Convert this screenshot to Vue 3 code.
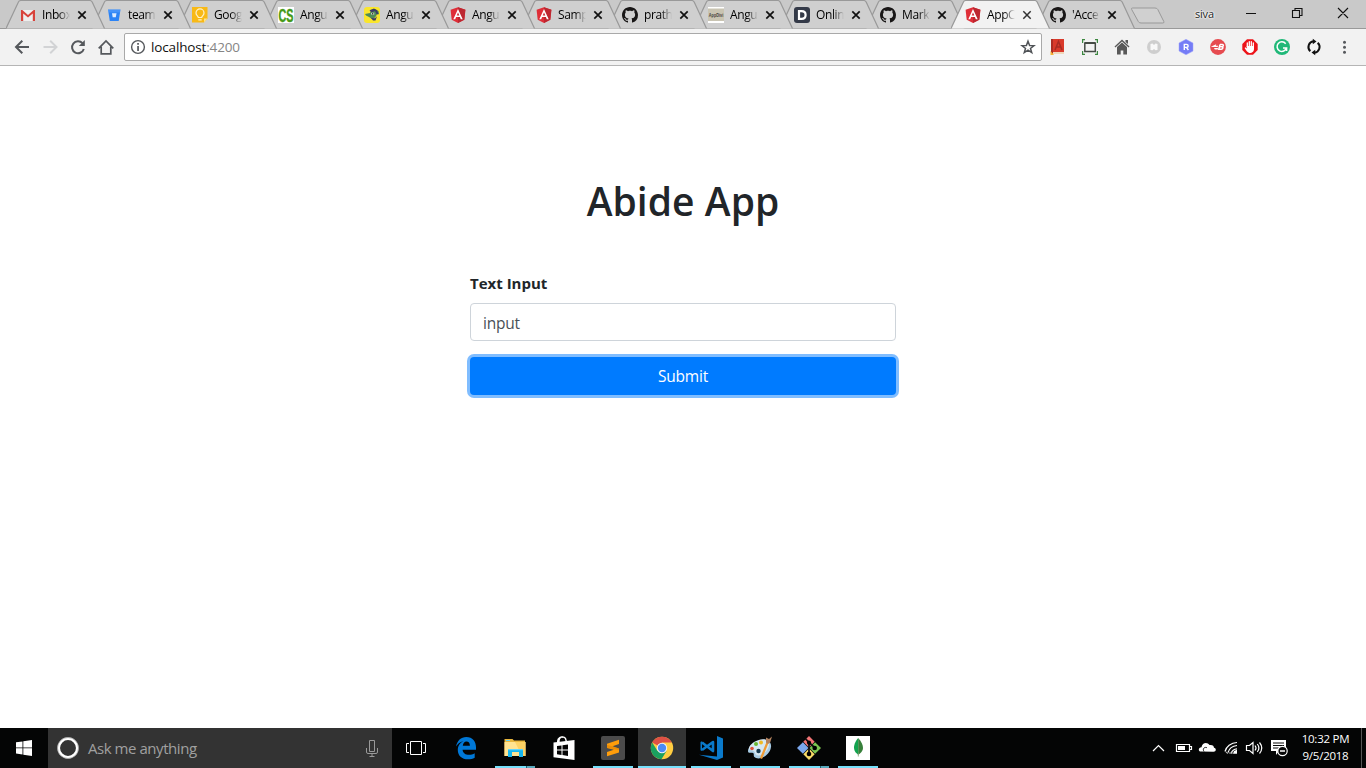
<script setup>
const tabs = [
  { title: 'Inbox', icon: 'gmail' },
  { title: 'team', icon: 'bucket' },
  { title: 'Goog', icon: 'keep' },
  { title: 'Angu', icon: 'cs' },
  { title: 'Angu', icon: 'bird' },
  { title: 'Angu', icon: 'angular' },
  { title: 'Samp', icon: 'angular' },
  { title: 'prath', icon: 'github' },
  { title: 'Angu', icon: 'appdiv' },
  { title: 'Onlin', icon: 'disqus' },
  { title: 'Mark', icon: 'github' },
  { title: 'AppC', icon: 'angular', active: true },
  { title: "'Acce", icon: 'github' }
]
const extensions = ['book', 'screen', 'house', 'pale', 'hex', 'bolt', 'hand', 'grammar', 'sync', 'menu']
const apps = [
  { icon: 'edge' },
  { icon: 'explorer', run: 'multi' },
  { icon: 'store' },
  { icon: 'sublime', run: 'one' },
  { icon: 'chrome', run: 'one', active: true },
  { icon: 'code', run: 'one' },
  { icon: 'paint', run: 'one' },
  { icon: 'git', run: 'multi' },
  { icon: 'mongo', run: 'one' }
]
</script>

<template>
  <div class="screen">
    <header class="tabstrip">
      <div class="tabs">
        <div v-for="(t, i) in tabs" :key="i" class="tab" :class="{ active: t.active }" :style="{ zIndex: t.active ? 30 : 20 - i }">
          <svg class="shape" width="100" height="29" viewBox="0 0 100 29">
            <path d="M0 28.5 L12.3 2.3 Q13 .5 15 .5 H83.500 Q85.500 .5 86.300 2.300 L98.500 28.500" />
          </svg>
          <svg class="fav" viewBox="0 0 16 16">
            <g v-if="t.icon === 'gmail'">
              <path fill="#eee" d="M1 3h14v11H1z" />
              <path fill="#d8433b" d="M1 14V3h1.300L8 8l5.700-5H15v11h-2.200V6.400L8 10.600 3.200 6.400V14z" />
            </g>
            <g v-else-if="t.icon === 'bucket'">
              <path fill="#2b83f6" d="M2 2.500h12.500L12.700 14H3.800z" />
              <path fill="#76b1ff" d="M2 2.500h12.500l-.5 3H2.500z" opacity=".35" />
              <path fill="#dcebff" d="M6 6.300h4.500l-.7 3.900H6.700z" />
            </g>
            <g v-else-if="t.icon === 'keep'">
              <path fill="#f8b916" d="M0 0h15.500v11.500L12 15.500H0z" />
              <path fill="#fce28d" d="M15.500 11.500H12v4z" />
              <path fill="none" stroke="#fff2c8" stroke-width="1.200" d="M6.300 10.500c0-1.500-2.300-2-2.300-4.600a4 4 0 0 1 8 0c0 2.600-2.300 3.100-2.300 4.600zM6.300 12.800h3.400" />
            </g>
            <g v-else-if="t.icon === 'cs'">
              <path fill="#fff" d="M0 0h16v16H0z" />
              <text x=".5" y="14.500" textLength="15" lengthAdjust="spacingAndGlyphs" font-family="Liberation Sans" font-weight="700" font-size="18" fill="#459a17" stroke="#459a17" stroke-width=".4">CS</text>
            </g>
            <g v-else-if="t.icon === 'bird'">
              <rect width="16" height="16" rx="3" fill="#fae62c" />
              <path fill="#4e8b57" d="M1 7l5-1 1-3 4-1 3.500 2 .5 3-2 .5-2 3-3 1.500L5 10 2 8.500z" />
              <path fill="#3c3d69" d="M5.500 3.300L10 1.600 13 3.300l1.500 4-2-.3-1.500-3-3.500 1.500zM7 11l4 .3 2-2-1.500 4.200H9z" />
              <path fill="#d8e5cd" d="M7.200 5.800h3v1.800h-3z" />
              <circle cx="8.700" cy="6.700" r=".7" fill="#222" />
            </g>
            <g v-else-if="t.icon === 'angular'">
              <path fill="#df2e38" d="M8 .2l7.400 2.600-1.100 9.900L8 16l-6.300-3.300L.6 2.800z" />
              <path fill="#bd2730" d="M8 .2l7.400 2.600-1.100 9.900L8 16z" />
              <path fill="#fff" fill-rule="evenodd" d="M8 1.900l4.700 10.400h-1.900l-.9-2.400H6.100l-.9 2.400H3.300zM8 5.400L6.700 8.400h2.600z" />
            </g>
            <path v-else-if="t.icon === 'github'" fill="#181616" d="M8 0C3.580 0 0 3.580 0 8c0 3.540 2.290 6.530 5.470 7.590.4.070.55-.17.55-.38 0-.19-.01-.82-.01-1.490-2.010.37-2.530-.49-2.690-.94-.09-.23-.48-.94-.82-1.130-.28-.15-.68-.52-.01-.53.63-.01 1.080.58 1.230.82.72 1.210 1.870.87 2.330.66.070-.52.28-.87.51-1.070-1.780-.2-3.640-.89-3.640-3.950 0-.87.31-1.590.82-2.150-.08-.2-.36-1.020.08-2.120 0 0 .67-.21 2.200.82.64-.18 1.320-.27 2-.27s1.360.09 2 .27c1.530-1.040 2.200-.82 2.200-.82.44 1.100.16 1.920.08 2.120.51.56.82 1.270.82 2.150 0 3.070-1.870 3.750-3.650 3.950.29.25.54.73.54 1.480 0 1.070-.01 1.930-.01 2.200 0 .21.15.46.55.38A8.010 8.010 0 0 0 16 8c0-4.420-3.580-8-8-8z" />
            <g v-else-if="t.icon === 'appdiv'">
              <path fill="#fff" d="M0 0h16v16H0z" />
              <path fill="#c9c4b2" d="M0 1.500h16V14H0z" />
              <text x=".8" y="9.600" textLength="14.400" lengthAdjust="spacingAndGlyphs" font-family="Liberation Sans" font-weight="700" font-size="4.600" fill="#45423c">AppDivi</text>
            </g>
            <g v-else>
              <rect width="16" height="16" rx="3" fill="#343a48" />
              <path fill="none" stroke="#fff" stroke-width="2.200" d="M5 4.100h2.600c2.500 0 4 1.500 4 3.900s-1.500 3.900-4 3.900H5z" />
            </g>
          </svg>
          <span class="title">{{ t.title }}</span>
          <svg class="close" viewBox="0 0 8 8"><path d="M.3.300l7.400 7.400M7.700.300L.3 7.700" /></svg>
        </div>
      </div>
      <svg class="newtab" width="36" height="18" viewBox="0 0 36 18"><path d="M2.500 1H25q2 0 2.800 1.500l6 12q.7 1.500-1 1.500H11q-2 0-2.700-1.500L1.700 2.500q-.7-1.500.8-1.500z" /></svg>
      <span class="user">siva</span>
      <svg class="winctl" width="116" height="14" viewBox="0 0 116 14">
        <path d="M1 7.500h10M47.500 4.500h7v7h-7zM50 4V2.500h7v7H55M93 2l10 10M103 2L93 12" />
      </svg>
    </header>

    <nav class="toolbar">
      <svg class="navicons" width="116" height="20" viewBox="0 0 116 20">
        <g fill="none" stroke="#55585c" stroke-width="2">
          <path d="M29 10H16.500M22.300 3.700L16 10l6.300 6.300" />
          <path stroke="#d2d3d5" d="M43.500 10H56M50.200 3.700L56.500 10l-6.300 6.300" />
          <path d="M82.500 6.200A6 6 0 1 0 83.800 12" />
          <path stroke-width="1.700" d="M98.700 11.300L106 4l7.300 7.300M101.200 9.800v7h9.600v-7" />
        </g>
        <path fill="#55585c" d="M84.800 3v6h-6z" />
      </svg>
      <div class="omnibox">
        <svg class="info" viewBox="0 0 16 16"><circle cx="8" cy="8" r="6.400" fill="none" stroke="#55585c" stroke-width="1.400" /><path fill="#55585c" d="M7.200 4h1.700v1.700H7.200zM7.200 7h1.700v5H7.200z" /></svg>
        <span class="url">localhost<i>:4200</i></span>
        <svg class="star" viewBox="0 0 16 16"><path d="M8 2.200l1.600 4.200 4.400.2-3.500 2.800 1.200 4.200L8 11.200l-3.700 2.400 1.200-4.200L2 6.600l4.400-.2z" /></svg>
      </div>
      <div class="exts">
        <svg v-for="e in extensions" :key="e" viewBox="0 0 16 16">
          <g v-if="e === 'book'">
            <path fill="#d93a2b" d="M1 0h13v15H1z" /><path fill="#aa2d24" d="M1 0h2v14H1z" />
            <path fill="#efd7ba" d="M3 13h11v2H3z" />
            <path fill="none" stroke="#a82c24" stroke-width="1.500" d="M5 11l3.500-8.500 3.500 8.500M6.500 8h4" />
            <path fill="#f6b635" d="M.5 12l3.500 4H.5z" />
          </g>
          <g v-else-if="e === 'screen'" fill="none">
            <path stroke="#454b45" stroke-width="1.500" d="M2.800 4h10.500v8.500H2.800z" />
            <path stroke="#454b45" stroke-width="2" d="M3 4h10" />
            <path stroke="#3c8840" stroke-width="1.200" d="M.6 4V.6H3M13 .6h2.400V4M.6 12v3.400H3M13 15.400h2.400V12" />
          </g>
          <g v-else-if="e === 'house'" fill="#595959">
            <path d="M8 .5l7.500 7-.9 1L8 2.500 1.400 8.500l-.9-1zM11.500 1H14v4l-2.500-2z" />
            <path d="M3 8l5-4.600L13 8v7.500H9.300v-4H6.700v4H3z" />
          </g>
          <g v-else-if="e === 'pale'">
            <circle cx="8" cy="8" r="7" fill="#cecece" />
            <path fill="#f8f8f8" d="M4.500 5l2-.5L8 6l1.500-1.500 2 .5v6l-2 .3L8 10l-1.500 1.300-2-.3z" />
          </g>
          <g v-else-if="e === 'hex'">
            <path fill="#757cf6" stroke="#9fa5fa" stroke-width=".5" d="M8 .3l7 3.800v8L8 15.800 1 12V4z" />
            <path fill="none" stroke="#fff" stroke-width="1.400" d="M6.300 11V5.400h2.200c2.200 0 2.200 3 0 3H6.500M8.400 8.400l2 2.600" />
          </g>
          <g v-else-if="e === 'bolt'">
            <circle cx="8" cy="8" r="7.900" fill="#e64b50" />
            <path fill="#fff" d="M.8 7.800l5.400-2.500L5.800 6.800h2.300L7.700 8H3.500zM4 9h4L7.700 10.500H4.800z" />
            <path fill="none" stroke="#fff" stroke-width="1.500" d="M10 5.500h2.400c1.600 0 1 2.300-.4 2.300H9.700m2.300 0c1.600 0 .9 2.500-.7 2.500H8.800l1.200-4.800" />
          </g>
          <g v-else-if="e === 'hand'">
            <path fill="#ed1319" d="M5 .3h6l4.700 4.700v6L11 15.700H5L.3 11V5z" />
            <path fill="none" stroke="#fff" stroke-width="1.300" stroke-linecap="round" d="M5.300 8V4M7.300 7V2.600M9.300 7V2.600M11.300 8V4" />
            <path fill="#fff" d="M4.600 7h7.400v3.300C11.800 13 10 14 8.200 14c-2.800 0-3.700-2.400-5.600-5l.8-.7 1.700 1.200z" />
          </g>
          <g v-else-if="e === 'grammar'">
            <circle cx="8" cy="8" r="8" fill="#20b878" />
            <path fill="none" stroke="#fff" stroke-width="1.500" d="M11.700 4.700A4.800 4.800 0 1 0 12.500 9H9M12.600 8.500V12" />
          </g>
          <g v-else-if="e === 'sync'" fill="none" stroke="#111" stroke-width="2">
            <path d="M4.300 12.300A5.800 5.800 0 0 1 7.500 2.300M11.700 3.700A5.800 5.800 0 0 1 8.500 13.700" />
            <path fill="#111" stroke="none" d="M6.800-.3L10.500 2.500 6.800 5.300zM9.200 16.300L5.500 13.500l3.700-2.800z" />
          </g>
          <g v-else fill="#55585c"><circle cx="6.500" cy="3.200" r="1.500" /><circle cx="6.500" cy="8.200" r="1.500" /><circle cx="6.500" cy="13.200" r="1.500" /></g>
        </svg>
      </div>
    </nav>

    <main class="page">
      <h1>Abide App</h1>
      <form @submit.prevent>
        <label for="text">Text Input</label>
        <input id="text" type="text" value="input" />
        <button type="submit">Submit</button>
      </form>
    </main>

    <footer class="taskbar">
      <div class="start">
        <svg width="16" height="16" viewBox="0 0 16 16" fill="#fff"><path d="M0 2.300L6.500 1.400v6.100H0zM7.300 1.300L16 0v7.500H7.300zM0 8.300h6.500v6.200L0 13.600zM7.300 8.300H16V16l-8.700-1.300z" /></svg>
      </div>
      <div class="search">
        <svg width="22" height="22" viewBox="0 0 22 22"><circle cx="11" cy="11" r="9.300" fill="none" stroke="#fff" stroke-width="2.700" /><circle cx="11" cy="11" r="10.500" fill="none" stroke="#999" stroke-width=".7" /></svg>
        <span>Ask me anything</span>
        <svg class="mic" width="12" height="17" viewBox="0 0 12 17"><path d="M3.500.500h5v11h-5zM.5 8v4q0 1.500 1.500 1.500h8q1.500 0 1.500-1.500V8M6 13.500v3M3.500 16.500h5" /></svg>
      </div>
      <div class="taskview">
        <svg width="20" height="14" viewBox="0 0 20 14" fill="none" stroke="#fff"><path d="M4.500.500h11v13h-11zM3 2.500H.5v9H3M17 2.500h2.500v9H17" /></svg>
      </div>
      <div v-for="a in apps" :key="a.icon" class="app" :class="[a.run, { active: a.active }]">
        <svg viewBox="0 0 24 24">
          <path v-if="a.icon === 'edge'" fill="#0078d7" d="M2 10.600C3.100 4.800 6.900 1 12.300 1 18.600 1 22 5.500 22 11.300v2.400H8.600c.2 3.400 3 5.100 6.300 5.100 2.200 0 4.100-.6 5.800-1.600v4.500c-1.900 1-4.200 1.500-6.700 1.500-6.200 0-10.200-3.600-10.200-9.300 0-4 2.300-7.200 5.800-8.900C5.800 5.900 3.200 8.300 2 10.600zM8.800 9.800h7.100c0-2.700-1.200-4.200-3.500-4.200-2 0-3.300 1.700-3.600 4.200z" />
          <g v-else-if="a.icon === 'explorer'">
            <path fill="#e8b63d" d="M1.500 3h8l1.500 1.500h11V20h-20.500z" />
            <path fill="#ffe391" d="M1.500 6h21v14h-21z" />
            <path fill="#fdd264" d="M12 6h10.500v14H19z" />
            <path fill="#16b6ef" d="M5 13h15v8h-4v-5H9v5H5z" />
            <path fill="#62d4fa" d="M5 13h15v1.200H5zM3 4h4v1H3z" />
          </g>
          <g v-else-if="a.icon === 'store'">
            <path fill="none" stroke="#fff" stroke-width="1.400" d="M7 6V4.500C7 1 11.500-.5 13.500 2.500l1 3.500M5.700 7V5c0-3 3.500-5 6-3.500" />
            <path fill="#fff" d="M1.500 6.500L22.500 4v20L1.500 21.300z" />
            <path fill="#050505" d="M5 10l4.500-.6v4.200H5zM10.500 9.200l5.500-.8v5.200h-5.500zM5 14.600h4.500V19L5 18.300zM10.500 14.600H16v5.300l-5.500-.8z" />
          </g>
          <g v-else-if="a.icon === 'sublime'">
            <rect width="24" height="24" rx="2" fill="#4b4b4b" />
            <path fill="#ff9d0a" d="M6 7.700l12-3.900v4.300l-6.500 2.100L18 12.400v4L6 20.200V16l6.800-2.200L6 11.900z" />
            <path fill="#d77d00" d="M6 8.700L18 12.400V14L6 11.900z" opacity=".5" />
          </g>
          <g v-else-if="a.icon === 'chrome'">
            <circle cx="12" cy="12" r="11.200" fill="#ffcd41" />
            <path fill="#de5145" d="M12 12L2.200 6.500A11.200 11.200 0 0 1 21.800 6.500H12z" />
            <path fill="#1aa15f" d="M2.200 6.500A11.200 11.200 0 0 0 11.500 23.200L16.500 15 12 12 7.500 15z" />
            <circle cx="12" cy="12" r="5.200" fill="#f4f4f4" /><circle cx="12" cy="12" r="4.200" fill="#4c8bf5" />
          </g>
          <g v-else-if="a.icon === 'code'">
            <path fill="#0a7acb" d="M18 0l6 2.400v19.200L18 24 0 18.700l18 1.700z" />
            <path fill="none" stroke="#0a7acb" stroke-width="2.600" stroke-linejoin="round" d="M3 6.500L14 15V6L3 14" />
            <path fill="#0a7acb" d="M1.500 6l1.500-.7v9.700l-1.500-.8z" />
          </g>
          <g v-else-if="a.icon === 'paint'">
            <path fill="#a8cce5" d="M10 5c7-3 14 0 13 6-1 8-10 13-15 11-4-1.500-1-4-3-5-2-.8-5 1-5-2C0 11 5 7 10 5z" />
            <path fill="#d6e8f3" d="M10 4.300c6-2.500 12-.5 11 5-1 7-8 11-12 10-3-1-1-3.500-4-4.500-2-.7-4-.5-4-2C1 9.500 5 6 10 4.300z" />
            <circle cx="13" cy="6.500" r="2" fill="#efba25" /><circle cx="8" cy="8" r="2" fill="#6bb733" />
            <circle cx="4" cy="12.500" r="1.800" fill="#e05038" /><circle cx="10.500" cy="15" r="2.200" fill="#14384f" />
            <path stroke="#ef9b35" stroke-width="2.200" d="M19.500 6.500L13 22.500" /><path fill="#b2825f" d="M18 1.500l3 1.500 3-2.500-1.800 6L20 8l-2-1.500z" />
          </g>
          <g v-else-if="a.icon === 'git'">
            <path fill="#f37576" d="M12 0l5.700 5.700L12 11.500 6.300 5.700z" /><path fill="#7ba8ed" d="M5.900 6.200L11.500 12l-5.600 5.700L0 12z" />
            <path fill="#7bc651" d="M18.100 6.200L24 12l-5.900 5.700L12.500 12z" /><path fill="#f7da67" d="M12 12.500l5.700 5.700L12 24l-5.700-5.800z" />
            <path fill="none" stroke="#101010" stroke-width="1.800" d="M8.500 2.800l3.500 3.500V19M12 6.500l6 5.500" />
            <circle cx="12" cy="6.700" r="2.100" /><circle cx="12" cy="18" r="2.300" /><circle cx="17.700" cy="12" r="2.300" />
          </g>
          <g v-else>
            <path fill="#fff" d="M0 0h24v24H0z" />
            <path fill="#13a34f" d="M12.200 2C8.500 6.500 8 9.500 8 12c0 3.300 2.500 5.500 4.200 6.700z" />
            <path fill="#38803b" d="M12.200 2C15.700 6 17 9 17 12c0 3.300-3 5.700-4.800 6.700z" />
            <path stroke="#769b6c" stroke-width=".8" d="M12.300 17v3.500" />
          </g>
        </svg>
      </div>
      <div class="tray">
        <svg width="138" height="20" viewBox="0 0 138 20" fill="none" stroke="#fff" stroke-width="1.200">
          <path d="M1 13l5.500-5.500L12 13" />
          <path d="M24.500 6.500h13v7h-13zM38 8.500h1.500v3H38" /><path fill="#fff" stroke="none" d="M26 8h7v4h-7z" />
          <path fill="#fff" stroke="none" d="M49 13.500c-3 0-3-4 .5-4.300C50 4.500 55.500 3.500 57.500 7c3-.5 4.500 1 4.500 2.700 2.500.5 2.500 4-.5 4z" /><path stroke="#000" stroke-width=".9" d="M52 13.500c-2-3 1-5 3-3.700" />
          <path d="M73 13.500C74 9 79 4.500 85 4.500M76 14.500C77 11 80 8 85 7.500M79 15.500c1-3 3-4.500 6-4.700" /><path fill="#fff" stroke="none" d="M82 13l3-1.200v4h-4z" /><path stroke="#aaa" d="M74 14l2 1.500M77 15h5" />
          <path d="M94.500 7.500h3l3.500-3v11l-3.500-3h-3zM103 7.500q2 2.500 0 5M105.300 6q3.200 4 0 8M107.500 4.500q4.500 5.500 0 11" />
          <path fill="#fff" stroke="none" d="M119 2h15v11h-7l-3 4v-4h-5z" /><path stroke="#080808" d="M121 5h11M121 7.500h11M121 10h6" />
          <circle cx="130.500" cy="13" r="4.700" fill="#080808" stroke="#fff" /><path stroke-width="1.500" d="M128 13h5" />
        </svg>
      </div>
      <div class="clock"><span>10:32 PM</span><span>9/5/2018</span></div>
    </footer>
  </div>
</template>

<style>
html, body { margin: 0; overflow: hidden; background: #fff; }
</style>

<style scoped>
* { box-sizing: border-box; }
svg { display: block; flex: none; }
.screen { width: 1366px; height: 768px; display: flex; flex-direction: column; overflow: hidden; font-family: "Open Sans", "Noto Sans", sans-serif; }

.tabstrip { height: 29px; flex: none; display: flex; background: #c9c9c9; border-bottom: 1px solid #999; }
.tabs { display: flex; padding-left: 6px; width: 1130px; flex: none; height: 29px; }
.tab { position: relative; width: 86px; flex: none; height: 29px; display: flex; align-items: center; padding: 1px 0 0 14px; }
.tab:nth-child(n+11) { width: 85px; }
.shape { position: absolute; left: 0; top: 0; z-index: 0; }
.shape path { fill: #cfcfcf; stroke: #999; stroke-width: 1.200; }
.active .shape path { fill: #f2f2f2; }
.fav { width: 16px; height: 16px; position: relative; }
.title { position: relative; margin-left: 6px; width: 28px; overflow: hidden; white-space: nowrap; font-size: 12px; line-height: 16px; letter-spacing: -.4px; color: #000; -webkit-mask-image: linear-gradient(90deg, #000 60%, transparent); mask-image: linear-gradient(90deg, #000 60%, transparent); }
.close { position: relative; width: 8px; height: 8px; margin-left: 8px; overflow: visible; }
.close path { stroke: #111; stroke-width: 1.700; fill: none; }
.active .close path { stroke: #333; stroke-width: 1.500; }
.newtab { margin-top: 7px; }
.newtab path { fill: #d0d0d0; stroke: #999; }
.user { margin-left: 29px; width: 22px; font-size: 11px; line-height: 28px; letter-spacing: -.2px; color: #222; text-shadow: 0 0 2px #fff, 0 0 2px #fff, 0 0 3px #fff; }
.winctl { margin: 6px 0 0 28px; }
.winctl path { fill: none; stroke: #111; stroke-width: 1.100; }

.toolbar { height: 37px; flex: none; display: flex; align-items: center; background: #f2f2f2; border-bottom: 1px solid #b5b5b5; }
.navicons { margin-right: 8px; }
.omnibox { width: 918px; height: 28px; display: flex; align-items: center; background: #fff; border: 1px solid #a9a9a9; border-radius: 2px; padding: 0 5px; }
.info { width: 16px; height: 16px; }
.url { flex: 1; margin-left: 5px; font-size: 13.500px; letter-spacing: -.15px; line-height: 20px; color: #111; }
.url i { font-style: normal; color: #858585; }
.star { width: 16px; height: 16px; }
.star path { fill: none; stroke: #505357; stroke-width: 1.500; }
.exts { display: flex; gap: 16px; margin-left: 8px; }
.exts svg { width: 16px; height: 16px; overflow: visible; }

.page { flex: 1; display: flex; flex-direction: column; align-items: center; background: #fff; padding-top: 111px; color: #212529; }
h1 { margin: 0; font-size: 39px; line-height: 48px; font-weight: 600; letter-spacing: .05px; }
form { width: 426px; display: flex; flex-direction: column; margin-top: 46px; }
label { font-size: 15px; line-height: 24px; font-weight: 700; margin-bottom: 8px; letter-spacing: 0; }
input { height: 38px; border: 1px solid #ced4da; border-radius: 4px; padding: 1px 12px 0; font: 15.500px "Open Sans", "Noto Sans", sans-serif; letter-spacing: -.2px; color: #495057; outline: 0; margin: 0 0 16px; }
button { height: 38px; border: 0; border-radius: 4px; background: #007bff; color: #fff; font: 15.500px "Open Sans", "Noto Sans", sans-serif; padding: 0; letter-spacing: -.2px; box-shadow: 0 0 0 3px #80bdff; }

.taskbar { height: 40px; flex: none; display: flex; background: #040505; }
.start { width: 48px; display: grid; place-items: center; }
.search { width: 344px; display: flex; align-items: center; padding: 0 14px 0 9px; background: #333; color: #a0a0a0; font-size: 15px; letter-spacing: -.45px; }
.search span { flex: 1; margin-left: 9px; }
.mic path { fill: none; stroke: #999; }
.taskview { width: 48px; margin-right: 1px; display: grid; place-items: center; }
.app { width: 48px; margin-left: 1px; display: flex; flex-direction: column; align-items: center; padding-top: 8px; }
.app > svg { width: 24px; height: 24px; }
.app::after { content: ""; width: 40px; height: 2px; margin-top: 6px; }
.app.one::after { background: #76e0fb; }
.app.multi::after { background: linear-gradient(90deg, #76e0fb 31px, #24606f 31px, #24606f 32px, #58a9bd 32px); }
.app.active { background: #343535; }
.app.active::after { width: 48px; }
.tray { margin-left: auto; display: flex; align-items: center; }
.clock { width: 72px; display: flex; flex-direction: column; justify-content: center; align-items: center; border-right: 1px solid #555; margin: 0 4px 0 0; padding: 0 0 2px; color: #fff; font-size: 11.500px; line-height: 17px; letter-spacing: -.25px; }
</style>
